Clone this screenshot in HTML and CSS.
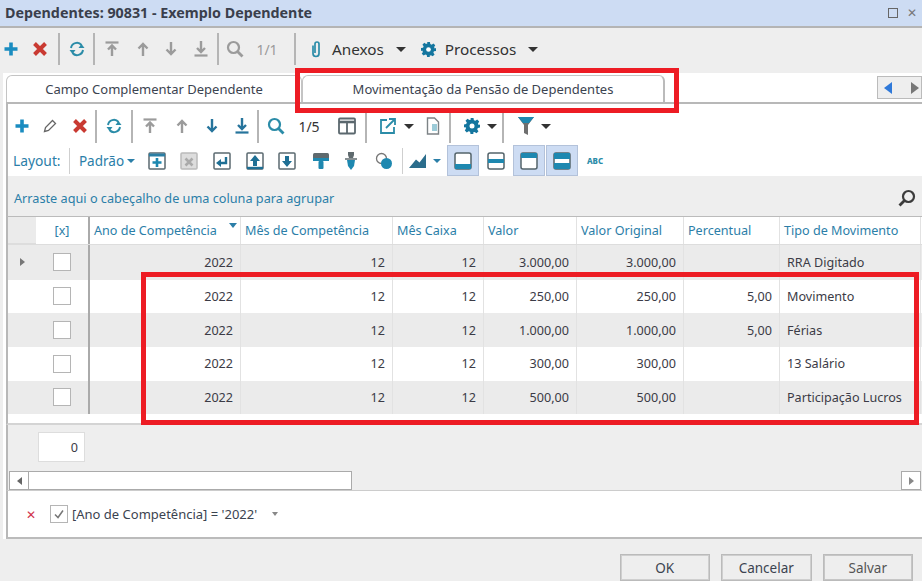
FILE: index.html
```html
<!DOCTYPE html>
<html lang="pt-BR">
<head>
<meta charset="utf-8">
<title>Dependentes</title>
<link rel="stylesheet" href="styles.css">
</head>
<body>
<svg class="defs" width="0" height="0">
  <symbol id="plus" viewBox="0 0 16 16"><path d="M8 1.500v13M1.500 8h13" stroke="currentColor" stroke-width="3.600" fill="none"/></symbol>
  <symbol id="cross" viewBox="0 0 16 16"><path d="M2.500 2.500l11 11M13.500 2.500l-11 11" stroke="currentColor" stroke-width="4" fill="none"/></symbol>
  <symbol id="refresh" viewBox="0 0 18 18"><path d="M3 8a6 6 0 0 1 10.500-3M15 10a6 6 0 0 1-10.500 3" stroke="currentColor" stroke-width="2" fill="none"/><path d="M10.500 8h6l-3-4zM1.500 10h6l-3 4z" fill="currentColor"/></symbol>
  <symbol id="top" viewBox="0 0 16 16"><path d="M1.500 1.500h13" stroke="currentColor" stroke-width="2.200"/><path d="M8 15V5M4 8.500L8 4.500l4 4" stroke="currentColor" stroke-width="2.400" fill="none"/></symbol>
  <symbol id="up" viewBox="0 0 16 16"><path d="M8 15V3M3.500 7.500L8 3l4.500 4.500" stroke="currentColor" stroke-width="2.400" fill="none"/></symbol>
  <symbol id="down" viewBox="0 0 16 16"><path d="M8 1v12M3.500 8.500L8 13l4.500-4.500" stroke="currentColor" stroke-width="2.400" fill="none"/></symbol>
  <symbol id="bottom" viewBox="0 0 16 16"><path d="M8 0v10.500M4 7L8 11l4-4" stroke="currentColor" stroke-width="2.400" fill="none"/><path d="M1.500 14.500h13" stroke="currentColor" stroke-width="2.200"/></symbol>
  <symbol id="search" viewBox="0 0 18 18"><circle cx="7.500" cy="7.500" r="5.500" stroke="currentColor" stroke-width="2.200" fill="none"/><path d="M11.500 11.500l5 5" stroke="currentColor" stroke-width="2.800"/></symbol>
  <symbol id="clip" viewBox="0 0 12 18"><path d="M3 5.500v8a3 3 0 0 0 6 0V4a2 2 0 0 0-4 0v9" stroke="currentColor" stroke-width="1.700" fill="none"/></symbol>
  <symbol id="gear" viewBox="0 0 16 16"><path d="M6.500 0h3l.4 2.200 1.500.6L13.200 1.500l2 2-1.200 1.900.6 1.500L16 6.500v3l-2.200.4-.6 1.500 1.300 1.800-2 2-1.900-1.200-1.500.6L9.500 16h-3l-.4-2.200-1.500-.6-1.800 1.300-2-2 1.200-1.900-.6-1.500L0 9.500v-3l2.200-.4.600-1.500L1.500 2.800l2-2 1.900 1.200 1.500-.6z" fill="currentColor"/><circle cx="8" cy="8" r="2.500" fill="#fff"/></symbol>
  <symbol id="pencil" viewBox="0 0 16 16"><path d="M2.500 13.500l1-4L10.500 2.500l3 3-7 7z" stroke="#666" stroke-width="1.300" fill="#fff"/></symbol>
  <symbol id="columns" viewBox="0 0 18 18"><rect x="1" y="1.500" width="16" height="15" rx="1" stroke="currentColor" stroke-width="1.800" fill="#fff"/><path d="M1 5h16" stroke="currentColor" stroke-width="2.600"/><path d="M9 4v12" stroke="currentColor" stroke-width="1.800"/></symbol>
  <symbol id="export" viewBox="0 0 18 18"><path d="M8 3H2v13h13v-6" stroke="currentColor" stroke-width="1.800" fill="none"/><path d="M7 11L15 3M10 2h6v6" stroke="currentColor" stroke-width="1.800" fill="none"/></symbol>
  <symbol id="doc" viewBox="0 0 14 18"><path d="M1.500 1h7l4 4v12h-11z" stroke="#7d8386" stroke-width="1.400" fill="#fff"/><rect x="6" y="7" width="5" height="7" fill="#9ccbd8"/></symbol>
  <symbol id="funnel" viewBox="0 0 18 20"><path d="M1 1h16l-6 8v10l-4-2V9z" fill="#6f6f6f"/><path d="M1 1h16l-5 6H6z" fill="#1e88b0"/></symbol>
  <symbol id="boxplus" viewBox="0 0 18 18"><rect x="1" y="1" width="16" height="16" rx="1" fill="#fff" stroke="#5b6a70" stroke-width="1.500"/><path d="M1 3h16" stroke="#2a7ea4" stroke-width="3"/><path d="M9 6v9M4.500 10.500h9" stroke="#1e88b0" stroke-width="2.600"/></symbol>
  <symbol id="boxx" viewBox="0 0 18 18"><rect x="1" y="1" width="16" height="16" rx="1" fill="#ddd" stroke="#bbb" stroke-width="1.500"/><path d="M5.500 6.500l7 7M12.500 6.500l-7 7" stroke="#aaa" stroke-width="2.600"/></symbol>
  <symbol id="boxret" viewBox="0 0 18 18"><rect x="1" y="1" width="16" height="16" rx="1" fill="#fff" stroke="#5b6a70" stroke-width="1.500"/><path d="M13 5v6H6" stroke="#1e6f94" stroke-width="2.400" fill="none"/><path d="M8 7v8l-5-4z" fill="#1e6f94"/></symbol>
  <symbol id="boxup" viewBox="0 0 18 18"><rect x="1" y="1" width="16" height="16" rx="1" fill="#fff" stroke="#5b6a70" stroke-width="1.500"/><path d="M9 3l5 6h-3v5H7V9H4z" fill="#1e6f94"/><path d="M1 16h16" stroke="#1e6f94" stroke-width="2.400"/></symbol>
  <symbol id="boxdown" viewBox="0 0 18 18"><rect x="1" y="1" width="16" height="16" rx="1" fill="#fff" stroke="#5b6a70" stroke-width="1.500"/><path d="M9 15l5-6h-3V4H7v5H4z" fill="#1e6f94"/></symbol>
  <symbol id="brush" viewBox="0 0 18 18"><rect x="1" y="1" width="16" height="7" rx="1.500" fill="#5f6a6e"/><rect x="1" y="6" width="16" height="3" fill="#1e88b0"/><rect x="6.500" y="9" width="5" height="8" rx="1" fill="#1e88b0"/></symbol>
  <symbol id="pin" viewBox="0 0 14 20"><path d="M4 1h6v3l-1 3H5L4 4z" fill="#5f6a6e"/><path d="M1 8h12" stroke="#5f6a6e" stroke-width="1.500"/><path d="M3 9h8l-1 6-3 4-3-4z" fill="#1e88b0"/></symbol>
  <symbol id="shapes" viewBox="0 0 18 18"><circle cx="6.500" cy="6.500" r="5" fill="#fff" stroke="#777" stroke-width="1.300"/><circle cx="11.500" cy="11.500" r="5.500" fill="#1e88b0"/></symbol>
  <symbol id="chart" viewBox="0 0 18 14"><path d="M0 14L7 5.500l3.500 3L17 0v14z" fill="#2b6d8c"/></symbol>
  <symbol id="lbottom" viewBox="0 0 18 18"><rect x="1" y="1" width="16" height="16" rx="2" fill="#fff" stroke="#54646b" stroke-width="1.500"/><rect x="1" y="12" width="16" height="5" fill="#1e88b0"/></symbol>
  <symbol id="lmiddle" viewBox="0 0 18 18"><rect x="1" y="1" width="16" height="16" rx="2" fill="#fff" stroke="#54646b" stroke-width="1.500"/><rect x="1" y="7" width="16" height="4" fill="#1e88b0"/></symbol>
  <symbol id="ltop" viewBox="0 0 18 18"><rect x="1" y="1" width="16" height="16" rx="2" fill="#fff" stroke="#54646b" stroke-width="1.500"/><rect x="1" y="1" width="16" height="5" fill="#1e88b0"/></symbol>
  <symbol id="lboth" viewBox="0 0 18 18"><rect x="1" y="1" width="16" height="16" rx="2" fill="#fff" stroke="#54646b" stroke-width="1.500"/><rect x="1" y="1" width="16" height="6" fill="#1e88b0"/><rect x="1" y="11" width="16" height="6" fill="#1e88b0"/></symbol>
</svg>

<header class="titlebar">
  <span class="title">Dependentes: 90831 - Exemplo Dependente</span>
  <span class="winbtns"><span class="win-max"></span><span class="win-close">✕</span></span>
</header>

<div class="toolbar tb-main">
  <svg class="i16 blue"><use href="#plus"/></svg>
  <svg class="i16 red"><use href="#cross"/></svg>
  <span class="sep"></span>
  <svg class="i18 teal"><use href="#refresh"/></svg>
  <span class="sep"></span>
  <svg class="i16 grey"><use href="#top"/></svg>
  <svg class="i16 grey"><use href="#up"/></svg>
  <svg class="i16 grey"><use href="#down"/></svg>
  <svg class="i16 grey"><use href="#bottom"/></svg>
  <span class="sep"></span>
  <svg class="i18 grey"><use href="#search"/></svg>
  <span class="pager dim">1/1</span>
  <span class="sep"></span>
  <svg class="clip teal"><use href="#clip"/></svg>
  <span class="menu">Anexos</span>
  <span class="caret"></span>
  <svg class="i14 gearblue"><use href="#gear"/></svg>
  <span class="menu">Processos</span>
  <span class="caret"></span>
</div>

<main class="panel">
  <div class="tabs">
    <span class="tab tab-a">Campo Complementar Dependente</span>
    <span class="tab tab-b">Movimentação da Pensão de Dependentes</span>
    <span class="tabnav"><i class="nav-l"></i><i class="nav-r"></i></span>
  </div>

  <div class="toolbar tb-grid">
    <svg class="i16 blue"><use href="#plus"/></svg>
    <svg class="i16"><use href="#pencil"/></svg>
    <svg class="i16 red"><use href="#cross"/></svg>
    <span class="sep"></span>
    <svg class="i18 teal"><use href="#refresh"/></svg>
    <span class="sep"></span>
    <svg class="i16 grey"><use href="#top"/></svg>
    <svg class="i16 grey"><use href="#up"/></svg>
    <svg class="i16 navy"><use href="#down"/></svg>
    <svg class="i16 navy"><use href="#bottom"/></svg>
    <span class="sep"></span>
    <svg class="i18 teal"><use href="#search"/></svg>
    <span class="pager">1/5</span>
    <svg class="i18 slate nudge-columns"><use href="#columns"/></svg>
    <span class="sep"></span>
    <svg class="i18 teal nudge-export"><use href="#export"/></svg>
    <span class="caret"></span>
    <svg class="doc"><use href="#doc"/></svg>
    <span class="sep"></span>
    <svg class="i16 gearblue nudge-gear"><use href="#gear"/></svg>
    <span class="caret"></span>
    <span class="sep"></span>
    <svg class="funnel"><use href="#funnel"/></svg>
    <span class="caret"></span>
  </div>

  <div class="toolbar tb-layout">
    <span class="lbl">Layout:</span>
    <span class="sep thin"></span>
    <span class="lbl">Padrão</span>
    <span class="caret small"></span>
    <svg class="i18"><use href="#boxplus"/></svg>
    <svg class="i18"><use href="#boxx"/></svg>
    <svg class="i18"><use href="#boxret"/></svg>
    <svg class="i18"><use href="#boxup"/></svg>
    <svg class="i18"><use href="#boxdown"/></svg>
    <svg class="i18"><use href="#brush"/></svg>
    <svg class="pin"><use href="#pin"/></svg>
    <svg class="i18"><use href="#shapes"/></svg>
    <span class="sep thin"></span>
    <svg class="chart"><use href="#chart"/></svg>
    <span class="caret small"></span>
    <span class="toggle on first"><svg class="i18"><use href="#lbottom"/></svg></span>
    <span class="toggle"><svg class="i18"><use href="#lmiddle"/></svg></span>
    <span class="toggle on"><svg class="i18"><use href="#ltop"/></svg></span>
    <span class="toggle on"><svg class="i18"><use href="#lboth"/></svg></span>
    <span class="abc">ABC</span>
  </div>

  <div class="groupbar">
    <span>Arraste aqui o cabeçalho de uma coluna para agrupar</span>
    <svg class="i18 dark flip"><use href="#search"/></svg>
  </div>

  <div class="grid">
    <div class="row head">
      <div class="c ind"></div>
      <div class="c chk">[x]</div>
      <div class="c sticky">Ano de Competência<i class="hfilter"></i></div>
      <div class="c">Mês de Competência</div>
      <div class="c">Mês Caixa</div>
      <div class="c">Valor</div>
      <div class="c">Valor Original</div>
      <div class="c">Percentual</div>
      <div class="c">Tipo de Movimento</div>
    </div>
    <div class="row alt tall">
      <div class="c ind"><i class="cur"></i></div><div class="c chk"><i class="box"></i></div>
      <div class="c sticky n">2022</div><div class="c n">12</div><div class="c n">12</div><div class="c n">3.000,00</div><div class="c n">3.000,00</div><div class="c n"></div><div class="c t">RRA Digitado</div>
    </div>
    <div class="row">
      <div class="c ind"></div><div class="c chk"><i class="box"></i></div>
      <div class="c sticky n">2022</div><div class="c n">12</div><div class="c n">12</div><div class="c n">250,00</div><div class="c n">250,00</div><div class="c n">5,00</div><div class="c t">Movimento</div>
    </div>
    <div class="row alt">
      <div class="c ind"></div><div class="c chk"><i class="box"></i></div>
      <div class="c sticky n">2022</div><div class="c n">12</div><div class="c n">12</div><div class="c n">1.000,00</div><div class="c n">1.000,00</div><div class="c n">5,00</div><div class="c t">Férias</div>
    </div>
    <div class="row">
      <div class="c ind"></div><div class="c chk"><i class="box"></i></div>
      <div class="c sticky n">2022</div><div class="c n">12</div><div class="c n">12</div><div class="c n">300,00</div><div class="c n">300,00</div><div class="c n"></div><div class="c t">13 Salário</div>
    </div>
    <div class="row alt">
      <div class="c ind"></div><div class="c chk"><i class="box"></i></div>
      <div class="c sticky n">2022</div><div class="c n">12</div><div class="c n">12</div><div class="c n">500,00</div><div class="c n">500,00</div><div class="c n"></div><div class="c t">Participação Lucros</div>
    </div>
  </div>

  <div class="gridfoot">
    <div class="sum">0</div>
    <div class="hscroll">
      <span class="sb sb-l"><i></i></span>
      <span class="thumb"></span>
      <span class="sb sb-r"><i></i></span>
    </div>
  </div>

  <div class="filterbar">
    <span class="fx">✕</span>
    <span class="fbox"><svg viewBox="0 0 12 12" class="fcheck"><path d="M2 6.500l3 3 5-7" stroke="#777" stroke-width="1.500" fill="none"/></svg></span>
    <span class="ftext">[Ano de Competência] = '2022'</span>
    <span class="fcaret"></span>
  </div>
</main>

<footer class="actions">
  <span class="btn">OK</span>
  <span class="btn">Cancelar</span>
  <span class="btn dis">Salvar</span>
</footer>

<div class="mark mark-tab"></div>
<div class="mark mark-rows"></div>
</body>
</html>
```
FILE: styles.css
```css
* { box-sizing: border-box; }
html, body { margin: 0; height: 100%; }
body {
  width: 922px; height: 581px; overflow: hidden; position: relative;
  background: #eeeeee; color: #3b3b46;
  font-family: "Noto Sans", sans-serif; font-size: 12.6px;
}
.defs { position: absolute; }
svg { display: block; overflow: visible; }
.i14 { width: 15px; height: 15px; }
.i16 { width: 16px; height: 16px; }
.i18 { width: 18px; height: 18px; }
.blue { color: #1a8cc0; }
.red { color: #c93a32; }
.teal { color: #2b8ca8; }
.grey { color: #9b9b9b; }
.navy { color: #26749c; }
.slate { color: #5b686e; }
.dark { color: #3c3c3c; }
.gearblue { color: #14769f; }
.flip { transform: scaleX(-1); }

.titlebar {
  height: 28px; background: #cddcf3; border-bottom: 2px solid #b4b4b4;
  display: flex; align-items: center; justify-content: space-between; padding: 0 0 1px 5px;
}
.title { font-weight: 700; font-size: 14.3px; color: #3a3f4c; }
.winbtns { display: flex; align-items: center; gap: 9px; width: 34px; }
.win-max { width: 10px; height: 10px; border: 1.500px solid #666; }
.win-close { color: #777; font-size: 12px; }

.toolbar { display: grid; align-items: center; justify-items: center; }
.sep { width: 2px; height: 32px; background: #b5b5b5; }
.sep.thin { width: 1px; height: 26px; background: #cfcfcf; }
.caret { width: 0; height: 0; border: 5px solid transparent; border-top: 5px solid #333; border-bottom: 0; }
.caret.small { border-width: 4px 4px 0; border-top-color: #2b7fa8; }
.pager { font-size: 14px; color: #333; }
.pager.dim { color: #9a9a9a; }
.menu { font-size: 15.3px; color: #333; }
.clip { width: 12px; height: 18px; }

.tb-main {
  height: 45px; padding-bottom: 3px;
  grid-template-columns: 22px 36px 2px 33px 2px 34px 27px 30px 30px 4px 30px 34px 22px 20px 64px 22px 32px 73px 32px;
}

.panel {
  margin-left: 3px; width: 919px; height: 466px; background: #fff;
  padding-left: 3px; position: relative;
}
.tabs {
  height: 31px; display: flex; align-items: flex-end;
  border-bottom: 2px solid #b8b8b8; position: relative;
}
.tab {
  display: flex; align-items: center; justify-content: center;
  height: 27px; border: 1px solid #c4c4c4; border-bottom: 0; border-radius: 6px 6px 0 0;
  background: #fff; color: #3b4350; font-size: 13px;
}
.tab-a { width: 296px; }
.tab-b { width: 363px; border-right: 2px solid #bbb; }
.tabnav {
  position: absolute; right: 0; top: 3px; width: 45px; height: 23px;
  background: #eeeeee; border: 1px solid #bbb; display: flex; align-items: center; gap: 19px; padding-left: 6px;
}
.nav-l { width: 0; height: 0; border: 6px solid transparent; border-left: 0; border-right: 8px solid #2f79d9; }
.nav-r { width: 0; height: 0; border: 6px solid transparent; border-right: 0; border-left: 8px solid #777; }

.tb-grid {
  height: 41px; padding-top: 3px; border-left: 2px solid #b8b8b8;
  grid-template-columns: 27px 30px 30px 2px 34px 2px 34px 30px 30px 30px 2px 34px 32px 40px 2px 35px 14px 33px 2px 36px 10px 12px 34px 6px;
}
.tb-grid .sep { height: 33px; }
.nudge-columns { margin-left: 4px; }
.nudge-export { margin-left: 7px; }
.nudge-gear { margin-left: 6px; }
.doc { width: 14px; height: 18px; }
.funnel { width: 18px; height: 20px; }

.tb-layout {
  height: 31px; border-left: 2px solid #b8b8b8; padding-left: 5px;
  grid-template-columns: 56px 1px 9px 45px 14px 38px 26px 40px 26px 38px 30px 30px 36px 1px 29px 10px 37px 33px 33px 33px 34px;
}
.lbl { color: #2b7ea8; font-size: 13.5px; white-space: nowrap; }
.tb-layout .lbl:first-child { justify-self: start; font-size: 13.8px; }
.tb-layout .lbl:nth-child(3) { grid-column: 4; }
.tb-layout .caret.small:nth-child(4) { grid-column: 5; }
.pin { width: 14px; height: 20px; }
.chart { width: 18px; height: 14px; }
.toggle {
  width: 32px; height: 31px; display: flex; align-items: center; justify-content: center;
  border: 1px solid transparent;
}
.toggle.on { background: #cddcf3; border-color: #b3c2da; }
.toggle.first { justify-self: end; }
.abc { font-size: 8px; font-weight: 800; color: #2b8ca8; }

.groupbar {
  height: 41px; background: #eeeeee; border-left: 2px solid #b8b8b8; padding: 4px 6px 0 6px;
  display: flex; align-items: center; justify-content: space-between;
  color: #2b7ea8; font-size: 12.7px; border-bottom: 1px solid #bbb;
}
.grid { border-left: 2px solid #b8b8b8; padding-bottom: 9px; border-bottom: 2px solid #d4d4d4; }
.row {
  display: grid; height: 33.7px;
  grid-template-columns: 28px 52px 153px 152px 91px 93px 107px 96px 141px;
}
.row.tall { height: 34.5px; }
.row.head { height: 28px; color: #2b7ea8; font-size: 12.6px; background: #fff; border-bottom: 1px solid #ddd; }
.row.alt { background: #ebebeb; }
.c {
  display: flex; align-items: center; padding: 0 4px; border-right: 1px solid #e2e2e2;
  white-space: nowrap; position: relative;
}
.c.n { justify-content: flex-end; padding-right: 7px; }
.c.t { padding-left: 7px; }
.c.ind { border-right: 0; justify-content: center; background: #fff; }
.row.head .c.ind, .row.alt .c.ind { background: #ebebeb; }
.row.head .c.ind { border-bottom: 1px solid #ddd; }
.c.chk { justify-content: center; border-right: 0; }
.c.sticky { border-left: 2px solid #aaa; }
.hfilter {
  position: absolute; right: 3px; top: 6px; width: 0; height: 0;
  border: 4px solid transparent; border-top: 5px solid #2b7ea8; border-bottom: 0;
}
.cur { width: 0; height: 0; border: 4px solid transparent; border-left: 5px solid #777; border-right: 0; }
.box { width: 18px; height: 18px; border: 1px solid #b5b5b5; background: #fff; }

.gridfoot {
  height: 66px; background: #eeeeee; border-left: 2px solid #b8b8b8;
  padding: 7px 0 0 1px; position: relative; border-bottom: 1px solid #ccc;
}
.sum {
  width: 47px; height: 30px; margin-left: 29px; background: #fff; border: 1px solid #ddd;
  display: flex; align-items: center; justify-content: flex-end; padding-right: 6px;
}
.hscroll { display: flex; align-items: stretch; height: 19px; margin-top: 9px; }
.sb { width: 20px; background: #fff; border: 1px solid #aaa; display: flex; align-items: center; justify-content: center; }
.sb-l i { width: 0; height: 0; border: 4px solid transparent; border-right: 5px solid #666; border-left: 0; }
.sb-r i { width: 0; height: 0; border: 4px solid transparent; border-left: 5px solid #888; border-right: 0; }
.thumb { width: 323px; background: #fff; border: 1px solid #aaa; border-left: 0; }
.sb-r { margin-left: auto; margin-right: 1px; }

.filterbar {
  height: 48px; display: flex; align-items: center; padding-left: 18px;
  border-left: 2px solid #b8b8b8; border-bottom: 2px solid #bbb; font-size: 13px;
}
.fx { color: #d0324a; font-size: 12px; width: 24px; }
.fbox { width: 18px; height: 18px; border: 1px solid #b5b5b5; margin-right: 4px; padding: 2px; }
.fcheck { width: 12px; height: 12px; }
.ftext { color: #3b4350; }
.fcaret { margin-left: 15px; width: 0; height: 0; border: 3.500px solid transparent; border-top: 4px solid #888; border-bottom: 0; }

.actions { display: flex; justify-content: flex-end; gap: 11px; padding: 15px 9px 0 0; }
.btn {
  width: 90.5px; height: 27px; display: flex; align-items: center; justify-content: center;
  background: #eeeeee; border: 2px solid #cfcfcf; outline: 1px solid #bbb; outline-offset: -1px; color: #3b4350; font-size: 13.5px;
}
.btn.dis { border-color: #c6c6c6; color: #555; }

.mark { position: absolute; border: 5px solid #ed1c24; pointer-events: none; }
.mark-tab { left: 295px; top: 68px; width: 384px; height: 45px; }
.mark-rows { left: 141px; top: 272px; width: 778px; height: 153px; }
```
